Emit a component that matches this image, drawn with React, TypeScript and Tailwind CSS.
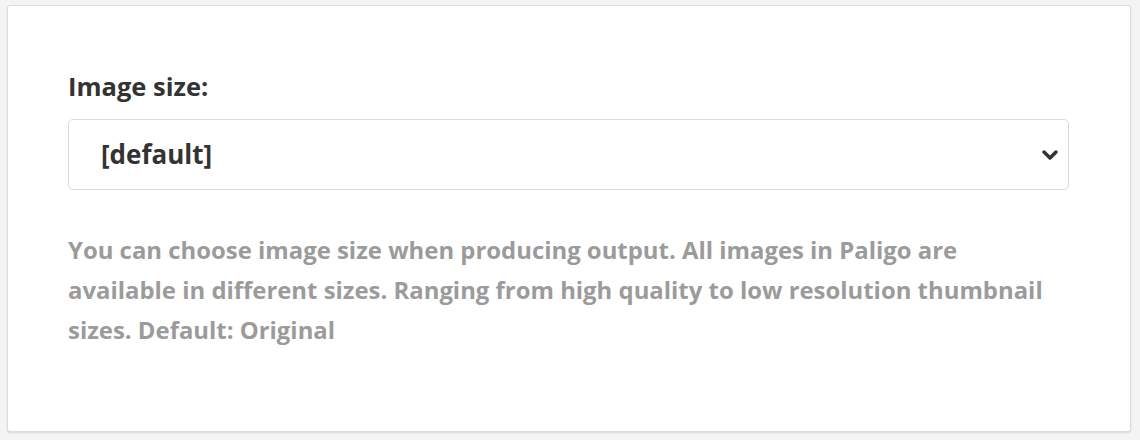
import { ChevronDown } from "lucide-react";

const App = () => {
  return (
    <div
      className="w-[1140px] h-[440px] bg-[#f4f4f4] pt-[5px] pl-[7px]"
      style={{ fontFamily: '"Open Sans", sans-serif' }}
    >
      <div className="w-[1124px] h-[427px] bg-white border border-[#dcdcdc] rounded-[3px] shadow-[0_1px_2px_rgba(0,0,0,0.12)] pl-[60px] pt-[63px]">
        <label className="block text-[25.5px] leading-[34px] font-bold text-[#333333]">Image size:</label>
        <div className="mt-[16px] w-[1001px] h-[71px] border border-[#dadada] rounded-[5px] flex items-center justify-between pl-[32px] pr-[6px]">
          <span className="text-[26px] font-bold text-[#333333]">[default]</span>
          <ChevronDown className="w-[24px] h-[24px] text-[#333333]" strokeWidth={3.5} />
        </div>
        <p className="mt-[40px] w-[1000px] text-[23.9px] leading-[40px] font-bold text-[#9b9b9b]">
          You can choose image size when producing output. All images in Paligo are available in different sizes. Ranging from high quality to low resolution thumbnail sizes. Default: Original
        </p>
      </div>
    </div>
  );
};

export default App;
